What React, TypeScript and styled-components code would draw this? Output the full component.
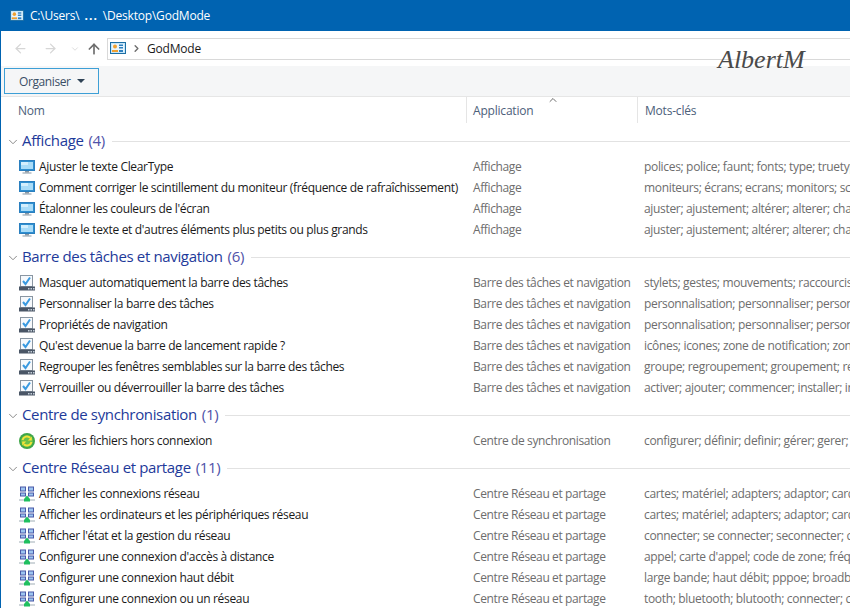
import React, { FC } from 'react';
import styled, { createGlobalStyle } from 'styled-components';
import { ArrowLeft, ArrowRight, ArrowUp, ChevronDown, ChevronRight, ChevronUp } from 'lucide-react';

const GlobalStyle = createGlobalStyle`
  html, body { margin: 0; padding: 0; background: #fff; }
  body { font-family: "Open Sans", "Noto Sans", sans-serif; font-size: 12px; }
`;

const Page = styled.div`
  position: relative;
  width: 850px;
  height: 608px;
  overflow: hidden;
  background: #fff;
  border-left: 1px solid #0063b1;
  box-sizing: border-box;
`;

const TitleBar = styled.div`
  height: 31px;
  margin-left: -1px;
  padding-left: 10px;
  background: #0063b1;
  color: #fff;
  display: flex;
  align-items: center;
  gap: 6px;
  font-size: 12px;
  letter-spacing: -0.2px;
`;

const Dots = styled.span`
  font-weight: 700;
  margin: 0 5px;
  letter-spacing: 1px;
`;

const NavBar = styled.div`
  height: 35px;
  display: flex;
  align-items: center;
  padding-left: 10px;
  box-sizing: border-box;
`;

const NavButton = styled.div<{ $w: number; $on?: boolean }>`
  width: ${(p) => p.$w}px;
  display: flex;
  justify-content: center;
  color: ${(p) => (p.$on ? '#6d6d6d' : '#d6d6d6')};
`;

const AddressBox = styled.div`
  flex: 1;
  height: 22px;
  box-sizing: border-box;
  border: 1px solid #d9d9d9;
  border-right: none;
  display: flex;
  align-items: center;
  padding: 0 0 1px 2px;
  color: #1a1a1a;
  letter-spacing: -0.2px;
`;

const Crumb = styled.span`
  margin: 0 5px 0 5px;
  display: flex;
  color: #6d6d6d;
`;

const Toolbar = styled.div`
  height: 31px;
  padding: 2px 0 0 3px;
  box-sizing: border-box;
  background: #f5f6f7;
  border-bottom: 1px solid #e6e6e6;
`;

const OrganizeButton = styled.div`
  width: 95px;
  height: 26px;
  box-sizing: border-box;
  border: 1px solid #3d9fd6;
  background: #f5f6f7;
  display: flex;
  align-items: center;
  padding-left: 14px;
  color: #3a4f66;
  letter-spacing: -0.4px;
`;

const Caret = styled.span`
  margin-left: 6px;
  border-left: 4px solid transparent;
  border-right: 4px solid transparent;
  border-top: 4px solid #2f4356;
`;

const HeaderRow = styled.div`
  position: relative;
  height: 26px;
  display: grid;
  grid-template-columns: 465px 171px 1fr;
  color: #4c607a;
  letter-spacing: -0.2px;
`;

const HeaderCell = styled.div<{ $pad: number; $sep?: boolean }>`
  display: flex;
  align-items: center;
  padding-left: ${(p) => p.$pad}px;
  border-left: ${(p) => (p.$sep ? '1px solid #e5e5e5' : 'none')};
`;

const SortMark = styled.span`
  position: absolute;
  left: 546px;
  top: -3px;
  display: flex;
  color: #6d6d6d;
`;

const List = styled.div`
  padding-top: 2px;
`;

const Group = styled.section`
  margin-top: 1px;
`;

const GroupHeader = styled.div`
  height: 31px;
  display: flex;
  align-items: center;
  padding-left: 5px;
  font-size: 15px;
  letter-spacing: -0.35px;
  &::after {
    content: '';
    flex: 1;
    height: 1px;
    margin-left: 7px;
    background: #e2e2e2;
  }
`;

const GroupChevron = styled.span`
  display: flex;
  color: #7a7a7a;
  margin-right: 2px;
`;

const GroupTitle = styled.span`
  color: #1e3a9a;
  margin-bottom: 4px;
`;

const Count = styled.span`
  color: #4f52a8;
  margin-left: 5px;
`;

const Row = styled.div`
  height: 21px;
  box-sizing: border-box;
  padding-bottom: 2px;
  display: grid;
  grid-template-columns: 466px 171px 1fr;
  align-items: center;
  white-space: nowrap;
  overflow: hidden;
  letter-spacing: -0.33px;
`;

const NameCell = styled.div`
  display: flex;
  align-items: center;
  gap: 4px;
  padding-left: 18px;
  color: #1a1a1a;
`;

const MutedCell = styled.div`
  color: #6d6d6d;
  padding-left: 6px;
  overflow: hidden;
`;

const AppCell = styled(MutedCell)`
  letter-spacing: -0.38px;
`;

const Signature = styled.div`
  position: absolute;
  left: 717px;
  top: 45px;
  font-family: "Liberation Serif", serif;
  font-style: italic;
  font-size: 26px;
  color: #4a4a4a;
`;

const PanelIcon: FC<{ w: number; h: number }> = ({ w, h }) => (
  <svg width={w} height={h} viewBox="0 0 16 12" preserveAspectRatio="none">
    <rect x="0.5" y="0.5" width="15" height="11" fill="#c6e6f8" stroke="#1c6ea4" />
    <rect x="2" y="2" width="12" height="8" fill="#e8f5fc" />
    <circle cx="5" cy="4.5" r="2" fill="#f0a030" />
    <rect x="9" y="2.5" width="4" height="1.5" fill="#2d7fc0" />
    <rect x="9" y="5" width="4" height="1.5" fill="#2d7fc0" />
    <rect x="2" y="8" width="6" height="2" fill="#f0a030" />
    <rect x="9" y="8" width="4" height="2" fill="#2d7fc0" />
  </svg>
);

const MonitorIcon: FC = () => (
  <svg width="16" height="16" viewBox="0 0 16 16">
    <rect x="0.5" y="1.5" width="15" height="10" fill="#2f8fd0" stroke="#2a7fbf" />
    <rect x="2" y="3" width="12" height="7" fill="#a9dcf8" />
    <rect x="2" y="3" width="7" height="3" fill="#d4effd" />
    <rect x="6" y="12" width="4" height="1.5" fill="#8a98a3" />
    <rect x="3.5" y="13.5" width="9" height="1" fill="#8a98a3" />
  </svg>
);

const TaskbarIcon: FC = () => (
  <svg width="16" height="16" viewBox="0 0 16 16">
    <rect x="1.5" y="0.5" width="12" height="11" fill="#f6f9fc" stroke="#8a96a2" />
    <path d="M4 6l2.5 3L11 2.5" fill="none" stroke="#3a9ae0" strokeWidth="2" />
    <rect x="0" y="11.5" width="16" height="4" fill="#4a5666" />
    <rect x="9" y="13" width="1.5" height="1.5" fill="#c5d0da" />
    <rect x="11.5" y="13" width="1.5" height="1.5" fill="#c5d0da" />
    <rect x="14" y="13" width="1.5" height="1.5" fill="#c5d0da" />
  </svg>
);

const SyncIcon: FC = () => (
  <svg width="16" height="16" viewBox="0 0 16 16">
    <circle cx="8" cy="8" r="8" fill="#3fa648" />
    <circle cx="8" cy="8" r="6" fill="#6cc04a" />
    <path d="M3.5 7A4.6 4.6 0 0 1 11.2 4.8" fill="none" stroke="#f5e33a" strokeWidth="2" />
    <path d="M12.8 3.4v4h-4z" fill="#f5e33a" />
    <path d="M12.5 9A4.6 4.6 0 0 1 4.8 11.2" fill="none" stroke="#f5e33a" strokeWidth="2" />
    <path d="M3.2 12.6v-4h4z" fill="#f5e33a" />
  </svg>
);

const NetworkIcon: FC = () => (
  <svg width="16" height="16" viewBox="0 0 16 16">
    <rect x="1" y="0.5" width="6" height="5" fill="#4a5aa8" />
    <rect x="2" y="1.5" width="4" height="3" fill="#9cc4f0" />
    <rect x="9" y="0.5" width="6" height="5" fill="#4a5aa8" />
    <rect x="10" y="1.5" width="4" height="3" fill="#9cc4f0" />
    <rect x="1" y="6.5" width="6" height="4" fill="#4a5aa8" />
    <rect x="2" y="7.5" width="4" height="2" fill="#9cc4f0" />
    <rect x="9" y="6.5" width="6" height="4" fill="#4a5aa8" />
    <rect x="10" y="7.5" width="4" height="2" fill="#9cc4f0" />
    <rect x="0" y="13" width="16" height="2" fill="#cfd6da" />
    <path d="M8 9.5l3 3.5H5z" fill="#1fbf5f" />
    <rect x="5" y="13" width="6" height="2.5" fill="#1fbf5f" />
  </svg>
);

type GroupData = {
  title: string;
  count: number;
  app: string;
  icon: FC;
  rows: [string, string][];
};

const adjust = 'ajuster; ajustement; altérer; alterer; changer; modifier';
const perso = 'personnalisation; personnaliser; personnalisations';
const cards = 'cartes; matériel; adapters; adaptor; cards; carte réseau';

const groups: GroupData[] = [
  {
    title: 'Affichage',
    count: 4,
    app: 'Affichage',
    icon: MonitorIcon,
    rows: [
      ['Ajuster le texte ClearType', 'polices; police; faunt; fonts; type; truetype; lisible'],
      ['Comment corriger le scintillement du moniteur (fréquence de rafraîchissement)', 'moniteurs; écrans; ecrans; monitors; scintillement'],
      ["Étalonner les couleurs de l'écran", adjust],
      ["Rendre le texte et d'autres éléments plus petits ou plus grands", adjust],
    ],
  },
  {
    title: 'Barre des tâches et navigation',
    count: 6,
    app: 'Barre des tâches et navigation',
    icon: TaskbarIcon,
    rows: [
      ['Masquer automatiquement la barre des tâches', 'stylets; gestes; mouvements; raccourcis; rapide'],
      ['Personnaliser la barre des tâches', perso],
      ['Propriétés de navigation', perso],
      ["Qu'est devenue la barre de lancement rapide ?", 'icônes; icones; zone de notification; zone'],
      ['Regrouper les fenêtres semblables sur la barre des tâches', 'groupe; regroupement; groupement; regrouper'],
      ['Verrouiller ou déverrouiller la barre des tâches', 'activer; ajouter; commencer; installer; inclure'],
    ],
  },
  {
    title: 'Centre de synchronisation',
    count: 1,
    app: 'Centre de synchronisation',
    icon: SyncIcon,
    rows: [['Gérer les fichiers hors connexion', 'configurer; définir; definir; gérer; gerer; paramètres']],
  },
  {
    title: 'Centre Réseau et partage',
    count: 11,
    app: 'Centre Réseau et partage',
    icon: NetworkIcon,
    rows: [
      ['Afficher les connexions réseau', cards],
      ['Afficher les ordinateurs et les périphériques réseau', cards],
      ["Afficher l'état et la gestion du réseau", 'connecter; se connecter; seconnecter; connexion'],
      ["Configurer une connexion d'accès à distance", "appel; carte d'appel; code de zone; fréquence"],
      ['Configurer une connexion haut débit', 'large bande; haut débit; pppoe; broadband'],
      ['Configurer une connexion ou un réseau', 'tooth; bluetooth; blutooth; connecter; connexion'],
    ],
  },
];

const App: FC = () => (
  <Page>
    <GlobalStyle />
    <TitleBar>
      <PanelIcon w={14} h={11} />
      <span>
        C:\Users\<Dots>...</Dots>\Desktop\GodMode
      </span>
    </TitleBar>
    <NavBar>
      <NavButton $w={19}><ArrowLeft size={15} /></NavButton>
      <NavButton $w={40}><ArrowRight size={15} /></NavButton>
      <NavButton $w={10}><ChevronDown size={10} /></NavButton>
      <NavButton $w={27} $on><ArrowUp size={16} strokeWidth={2.5} /></NavButton>
      <AddressBox>
        <PanelIcon w={16} h={12} />
        <Crumb><ChevronRight size={11} strokeWidth={3} /></Crumb>
        GodMode
      </AddressBox>
    </NavBar>
    <Toolbar>
      <OrganizeButton>
        Organiser
        <Caret />
      </OrganizeButton>
    </Toolbar>
    <HeaderRow>
      <HeaderCell $pad={17}>Nom</HeaderCell>
      <HeaderCell $pad={6} $sep>Application</HeaderCell>
      <HeaderCell $pad={7} $sep>Mots-clés</HeaderCell>
      <SortMark><ChevronUp size={12} /></SortMark>
    </HeaderRow>
    <List>
      {groups.map((group) => (
        <Group key={group.title}>
          <GroupHeader>
            <GroupChevron><ChevronDown size={14} strokeWidth={1.5} /></GroupChevron>
            <GroupTitle>
              {group.title}
              <Count>({group.count})</Count>
            </GroupTitle>
          </GroupHeader>
          {group.rows.map(([name, keywords]) => (
            <Row key={name}>
              <NameCell>
                <group.icon />
                {name}
              </NameCell>
              <AppCell>{group.app}</AppCell>
              <MutedCell>{keywords}</MutedCell>
            </Row>
          ))}
        </Group>
      ))}
    </List>
    <Signature>AlbertM</Signature>
  </Page>
);

export default App;
